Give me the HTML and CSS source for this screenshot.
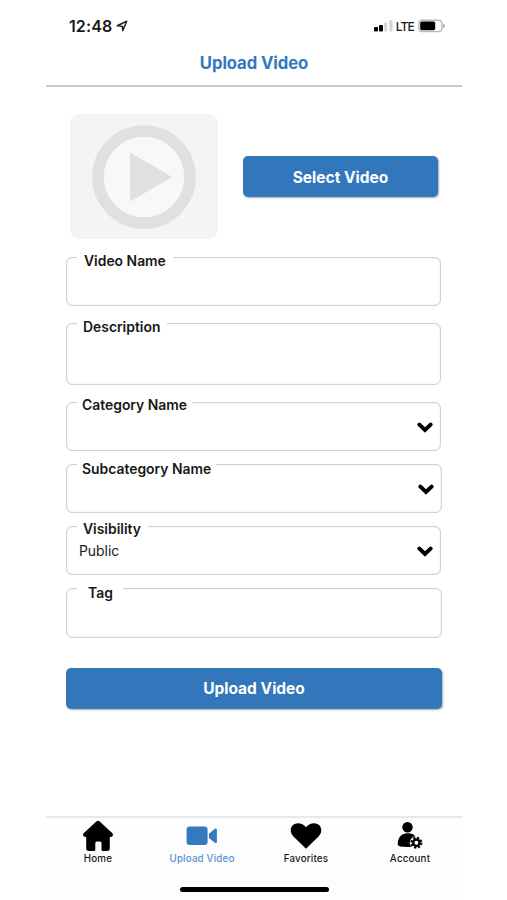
FILE: index.html
```html
<!DOCTYPE html>
<html lang="en">
<head>
<meta charset="utf-8">
<title>Upload Video</title>
<link rel="stylesheet" href="styles.css">
</head>
<body>
<div class="phone">
  <div class="status">
    <span class="time">12:48</span>
    <svg class="location" width="12" height="12" viewBox="0 0 12 12"><path d="M1.2 5.7 10.7 1.2 6.8 10.6 6.3 6.2Z" fill="none" stroke="#222" stroke-width="1.5" stroke-linejoin="round"/></svg>
    <svg class="signal" width="19" height="12" viewBox="0 0 19 12"><rect x="0" y="7" width="4" height="4.5" rx="1"/><rect x="5" y="5" width="4" height="6.5" rx="1"/><rect x="10.2" y="2.5" width="3" height="9" rx="1" fill="#d4d4d4"/><rect x="15.3" y="0" width="3.2" height="11.5" rx="1" fill="#d4d4d4"/></svg>
    <span class="lte">LTE</span>
    <svg class="battery" width="28" height="14" viewBox="0 0 28 14"><rect x=".9" y="1.2" width="23" height="11.4" rx="3.4" fill="#fff" stroke="#b9b9b9" stroke-width="1.4"/><rect x="2.2" y="2.6" width="15" height="8.6" rx="1.6"/><path d="M25 4.700q2 .7 2 2.300t-2 2.300z" fill="#aaa"/></svg>
  </div>
  <h1 class="title">Upload Video</h1>
  <main class="form">
    <div class="picker">
      <div class="thumb">
        <svg width="104" height="104" viewBox="0 0 104 104"><circle cx="52" cy="52" r="46" fill="#f8f8f8" stroke="#e0e0e0" stroke-width="11.6"/><path d="M38 27.500 80 52 38 76.500Z" fill="#e0e0e0"/></svg>
      </div>
      <button class="button select">Select Video</button>
    </div>
    <div class="field name"><label>Video Name</label></div>
    <div class="field description"><label>Description</label></div>
    <div class="field category"><label>Category Name</label>
      <svg class="chevron" width="16" height="11" viewBox="0 0 16 11"><path d="M2.400 2.600 8 7.900 13.600 2.600"/></svg></div>
    <div class="field subcategory"><label>Subcategory Name</label>
      <svg class="chevron" width="16" height="11" viewBox="0 0 16 11"><path d="M2.400 2.600 8 7.900 13.600 2.600"/></svg></div>
    <div class="field visibility"><label>Visibility</label><span class="value">Public</span>
      <svg class="chevron" width="16" height="11" viewBox="0 0 16 11"><path d="M2.400 2.600 8 7.900 13.600 2.600"/></svg></div>
    <div class="field tag"><label>Tag</label></div>
    <button class="button upload">Upload Video</button>
  </main>
  <nav class="tabs">
    <div class="tab">
      <svg width="32" height="32" viewBox="0 0 32 32"><path d="M14.300 1.500Q16 .1 17.700 1.500L30.400 13.300Q31.700 15 30.400 16.300 29.700 17.100 27.800 17V28.300Q27.800 31 25.200 31H20.800Q19.500 31 19.500 29.700V23.300Q19.500 21.600 18 21.600H14.800Q13.300 21.600 13.300 23.300V29.700Q13.300 31 12 31H7Q4.200 31 4.200 28.300V17Q2.300 17.100 1.600 16.300.3 15 1.600 13.300Z"/></svg>
      <span>Home</span>
    </div>
    <div class="tab active">
      <svg width="32" height="32" viewBox="0 0 32 32"><rect x=".6" y="6.500" width="21" height="18.500" rx="3.300"/><path d="M22.900 13.800 28.600 8.900Q30.900 7.500 30.900 10V21.500Q30.900 24 28.600 22.600L22.900 18Z"/></svg>
      <span>Upload Video</span>
    </div>
    <div class="tab">
      <svg width="32" height="32" viewBox="0 0 32 32"><path d="M16 28.700 3.200 16.200C-.8 12 .3 6 4.600 4 8.500 2.200 13 3.700 16 7.300 19 3.700 23.500 2.200 27.400 4 31.700 6 32.800 12 28.800 16.200Z"/></svg>
      <span>Favorites</span>
    </div>
    <div class="tab">
      <svg width="32" height="32" viewBox="0 0 32 32"><circle cx="13.500" cy="7.200" r="5.200"/><path d="M3.700 24.500C3.700 17 8 13.300 13.500 13.300S21.500 15.500 22.500 18.500V27H13.500Q3.700 27 3.700 24.500Z"/><circle cx="22.400" cy="22.700" r="6.600" fill="#fdfdfd"/><circle cx="22.400" cy="22.700" r="5" fill="none" stroke="#000" stroke-width="2" stroke-dasharray="2.200 1.727"/><circle cx="22.400" cy="22.700" r="3.200" fill="#fdfdfd" stroke="#000" stroke-width="2.500"/></svg>
      <span>Account</span>
    </div>
  </nav>
  <div class="home-bar"><i></i></div>
</div>
</body>
</html>
```

FILE: styles.css
```css
* { box-sizing: border-box; }
body { margin: 0; background: #fff; color: #181818; font-family: Inter, "Liberation Sans", sans-serif; }
.phone { width: 416px; height: 900px; margin: 0 auto 0 46px; display: flex; flex-direction: column; }
.status { height: 42px; flex: none; display: flex; align-items: center; padding: 10px 16px 0 23px; }
.time { font-size: 16px; font-weight: 600; line-height: 20px; letter-spacing: .1px; }
.location { margin-left: 4px; }
.signal { margin-left: auto; }
.lte { font-size: 12px; font-weight: 500; letter-spacing: -.8px; margin: 1px 4px 0 3px; line-height: 16px; }
.title { height: 45px; flex: none; margin: 0; border-bottom: 2px solid #cacaca; color: #3478bd; font-size: 16.700px; font-weight: 650; line-height: 43px; text-align: center; letter-spacing: -.1px; }
.form { flex: 1; padding: 27px 20px 0; display: flex; flex-direction: column; }
.picker { display: flex; align-items: center; padding-left: 4px; height: 125px; flex: none; }
.thumb { width: 148px; height: 125px; border-radius: 9px; background: #f4f4f4; display: flex; align-items: center; justify-content: center; }
.button { display: block; border: 0; padding: 1px 0 0; border-radius: 5px; background: #3277bb; color: #fff; font: 650 15.500px/40px Inter, sans-serif; height: 41px; box-shadow: 1px 1px 2px #0005; flex: none; }
.select { width: 195px; margin-left: 25px; padding-top: 2px; }
.upload { width: 376px; margin-top: 30px; }
.field { width: 375px; height: 49px; border: 1px solid #d2d2d2; box-shadow: inset 0 0 1px #bbb; border-radius: 6px; display: grid; grid-template-columns: 1fr auto; align-items: start; align-content: start; flex: none; }
.field label { grid-column: 1 / 3; justify-self: start; margin: -7px 0 0 10px; height: 19px; padding: 0 7px; background: #fff; font-size: 13.900px; font-weight: 600; line-height: 19px; }
.name { margin-top: 18px; }
.description { margin-top: 17px; height: 62px; }
.field.name label, .field.description label { margin-top: -6px; }
.description label, .visibility label { padding-left: 6px; }
.category { margin-top: 17px; }
.category label, .subcategory label { padding: 0 5px; }
.subcategory { margin-top: 13px; width: 376px; }
.subcategory label { margin-top: -5px; margin-bottom: -2px; }
.visibility { margin-top: 13px; }
.tag { margin-top: 13px; width: 376px; height: 50px; }
.tag label { padding: 0 10px 0 11px; margin-top: -5px; }
.value { font-size: 13.900px; line-height: 20px; margin: 2px 0 0 12px; }
.chevron { grid-column: 2; margin: 7px 7px 0 0; fill: none; stroke: #000; stroke-width: 4; stroke-linecap: round; stroke-linejoin: miter; }
.tabs { height: 62px; flex: none; border-top: 2px solid #e8e8e8; background: #fdfdfd; display: grid; grid-template-columns: repeat(4, 104px); padding-top: 2px; }
.tab { display: flex; flex-direction: column; align-items: center; font-size: 9.800px; font-weight: 550; letter-spacing: .15px; line-height: 13px; }
.active { color: #5b94cf; }
.active svg { fill: #3478bd; }
.home-bar { height: 22px; flex: none; background: #fdfdfd; display: flex; justify-content: center; align-items: flex-start; padding-top: 9px; }
.home-bar i { width: 149px; height: 5px; border-radius: 3px; background: #000; }
```
